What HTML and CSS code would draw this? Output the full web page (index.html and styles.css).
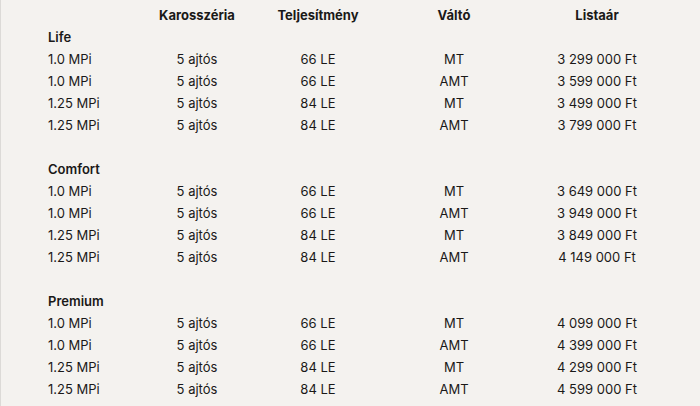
FILE: index.html
```html
<!DOCTYPE html>
<html lang="hu">
<head>
<meta charset="utf-8">
<title>Árlista</title>
<link rel="stylesheet" href="styles.css">
</head>
<body>
<div class="price-table">
  <div class="row head">
    <span></span><span>Karosszéria</span><span>Teljesítmény</span><span>Váltó</span><span>Listaár</span>
  </div>

  <div class="group">
    <div class="row label"><span>Life</span></div>
    <div class="row"><span>1.0 MPi</span><span>5 ajtós</span><span>66 LE</span><span>MT</span><span>3 299 000 Ft</span></div>
    <div class="row"><span>1.0 MPi</span><span>5 ajtós</span><span>66 LE</span><span>AMT</span><span>3 599 000 Ft</span></div>
    <div class="row"><span>1.25 MPi</span><span>5 ajtós</span><span>84 LE</span><span>MT</span><span>3 499 000 Ft</span></div>
    <div class="row"><span>1.25 MPi</span><span>5 ajtós</span><span>84 LE</span><span>AMT</span><span>3 799 000 Ft</span></div>
  </div>

  <div class="group">
    <div class="row label"><span>Comfort</span></div>
    <div class="row"><span>1.0 MPi</span><span>5 ajtós</span><span>66 LE</span><span>MT</span><span>3 649 000 Ft</span></div>
    <div class="row"><span>1.0 MPi</span><span>5 ajtós</span><span>66 LE</span><span>AMT</span><span>3 949 000 Ft</span></div>
    <div class="row"><span>1.25 MPi</span><span>5 ajtós</span><span>84 LE</span><span>MT</span><span>3 849 000 Ft</span></div>
    <div class="row"><span>1.25 MPi</span><span>5 ajtós</span><span>84 LE</span><span>AMT</span><span>4 149 000 Ft</span></div>
  </div>

  <div class="group">
    <div class="row label"><span>Premium</span></div>
    <div class="row"><span>1.0 MPi</span><span>5 ajtós</span><span>66 LE</span><span>MT</span><span>4 099 000 Ft</span></div>
    <div class="row"><span>1.0 MPi</span><span>5 ajtós</span><span>66 LE</span><span>AMT</span><span>4 399 000 Ft</span></div>
    <div class="row"><span>1.25 MPi</span><span>5 ajtós</span><span>84 LE</span><span>MT</span><span>4 299 000 Ft</span></div>
    <div class="row"><span>1.25 MPi</span><span>5 ajtós</span><span>84 LE</span><span>AMT</span><span>4 599 000 Ft</span></div>
  </div>
</div>
</body>
</html>
```

FILE: styles.css
```css
html, body {
  margin: 0;
  padding: 0;
  background: #f4f2ef;
}
body {
  width: 700px;
  height: 406px;
  overflow: hidden;
  box-sizing: border-box;
  border-left: 1px solid #dcdad7;
  font-family: Inter, "Liberation Sans", sans-serif;
  font-size: 13px;
  color: #1a1918;
}
.price-table {
  padding: 4px 0 0 47px;
  display: flex;
  flex-direction: column;
  gap: 22px;
}
.group {
  display: flex;
  flex-direction: column;
}
.head {
  margin-bottom: -22px;
}
.row {
  display: grid;
  grid-template-columns: 100px 98px 144px 128px 158px;
  height: 22px;
  line-height: 22px;
  white-space: nowrap;
}
.row span {
  text-align: center;
}
.row span:first-child {
  text-align: left;
}
.head span {
  font-weight: 700;
}
.label span {
  font-weight: 600;
}
```
